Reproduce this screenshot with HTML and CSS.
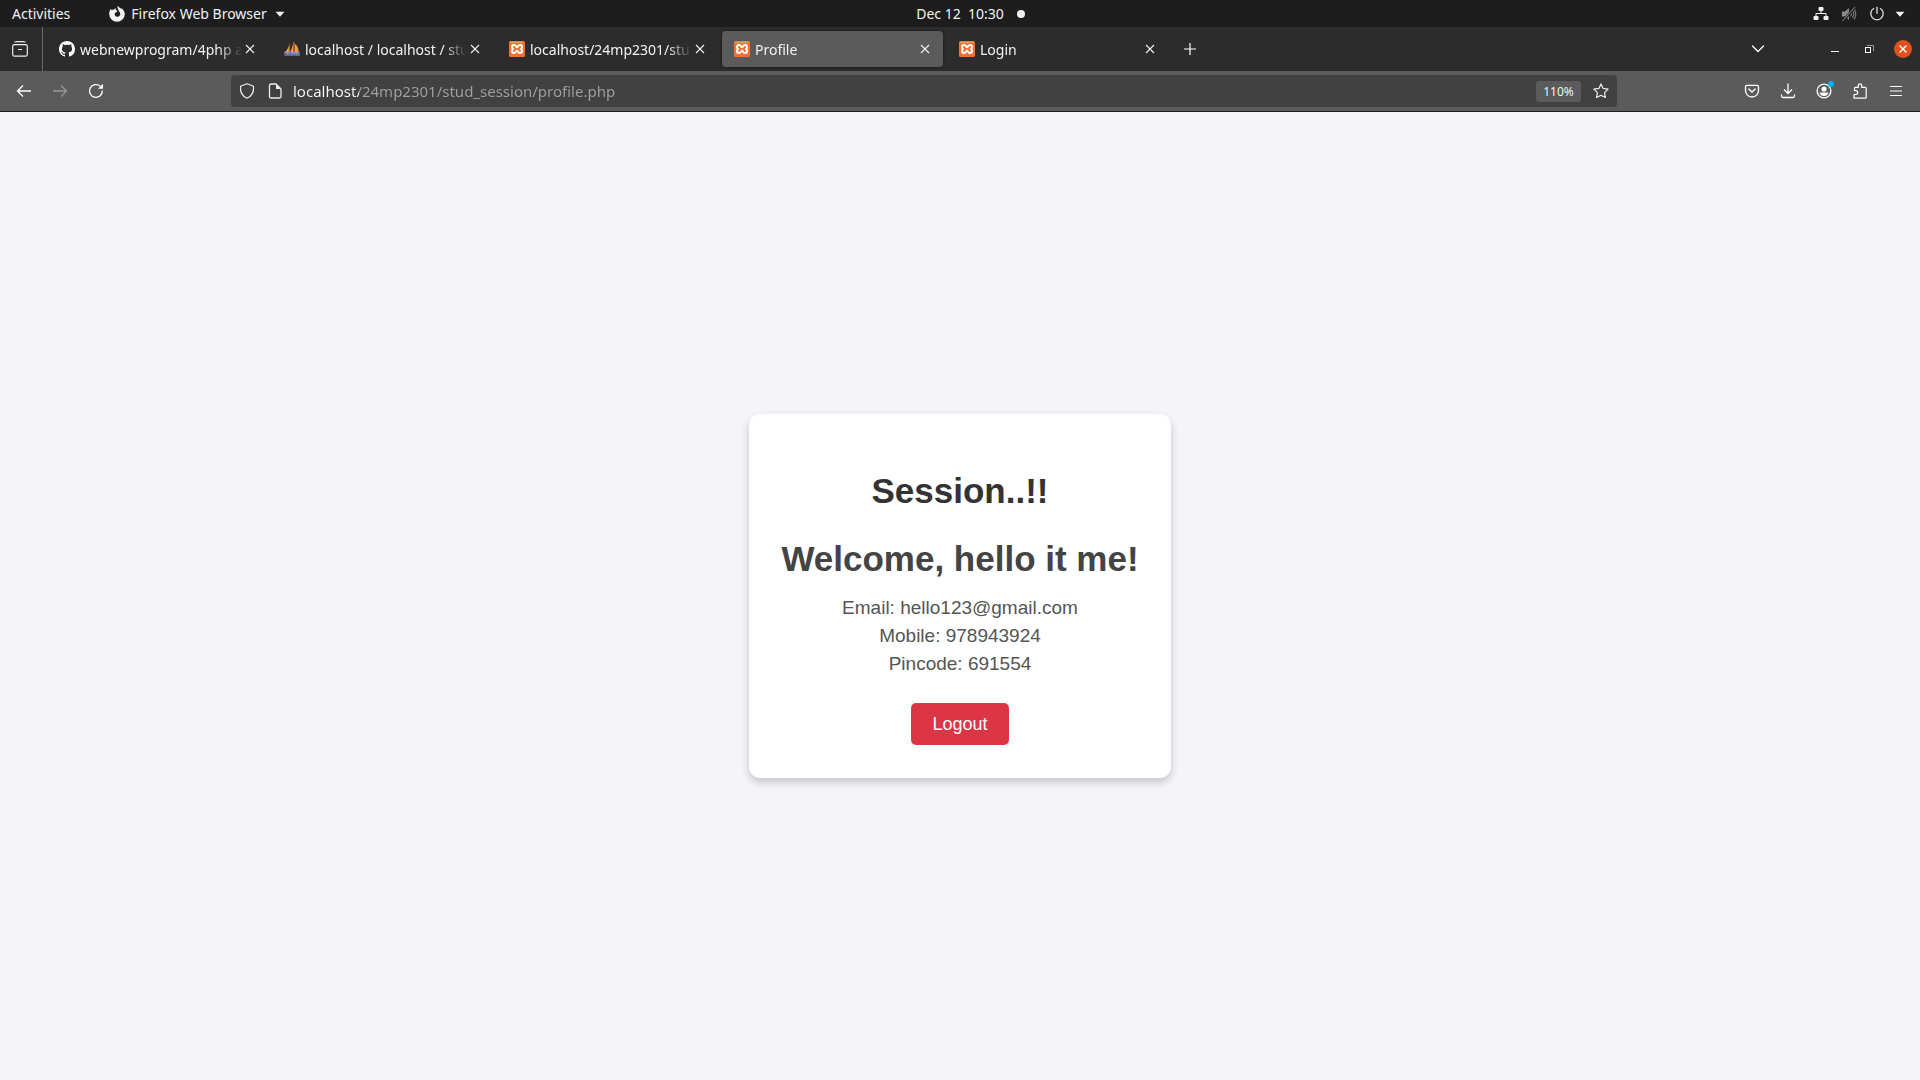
FILE: index.html
```html
<!DOCTYPE html>
<html lang="en">
<head>
<meta charset="utf-8">
<title>Profile</title>
<link rel="stylesheet" href="styles.css">
</head>
<body>
<svg class="defs" aria-hidden="true">
  <symbol id="close" viewBox="0 0 16 16"><path d="M4 4l8 8M12 4l-8 8" fill="none" stroke="currentColor" stroke-width="1.1"/></symbol>
  <symbol id="caret" viewBox="0 0 16 16"><path d="M3 5.500h10L8 11z" fill="currentColor"/></symbol>
  <symbol id="xampp" viewBox="0 0 16 16">
    <rect width="16" height="16" rx="1.500" fill="#f37030"/>
    <path d="M1 1.300h13" stroke="#f8b28c" stroke-width=".8"/>
    <path d="M8 6.300C7.200 6.300 7 4 5 4 3.600 4 3 5 3 6c0 .9.400 1.500 1 2-.6.500-1 1.100-1 2 0 1.100.600 2 2 2 2 0 2.200-2.300 3-2.300S9 12 11 12c1.400 0 2-.9 2-2 0-.9-.4-1.500-1-2 .6-.5 1-1.100 1-2 0-1-.6-2-2-2-2 0-2.200 2.300-3 2.300z" fill="none" stroke="#fff" stroke-width="2" stroke-linejoin="round"/>
  </symbol>
</svg>

<header class="topbar">
  <div class="topbar-left">
    <button class="top-item">Activities</button>
    <button class="top-item app-menu">
      <svg class="icon" viewBox="0 0 16 16"><path d="M8.500 0c2 .8 2.300 2 2.600 2.700l.7-.8C14 3 15.800 5.200 15.800 8A7.800 7.800 0 0 1 .2 8C.2 5.500 1 3.700 2 2.700l.4 1.600c.7-.5 1.500-.6 2.300-.5L6.600 2c0 1.200.2 2 .9 2.600l1 .5c-.2.900-1 1.200-2 1.500-.8.500-.6 1.300-.9 1.700.3 1.800 1.500 2.700 3 2.500 2-.2 3-1.900 2.500-3.800C10.600 5.300 8.300 3.500 8.500 0z" fill="#f2f2f2"/></svg>
      <span>Firefox Web Browser</span>
      <svg class="icon caret" viewBox="0 0 16 16"><use href="#caret"/></svg>
    </button>
  </div>
  <button class="clock"><span>Dec 12&nbsp; 10:30</span><i class="dot"></i></button>
  <button class="tray" aria-label="System menu">
    <svg class="icon" viewBox="0 0 16 16"><g fill="#f2f2f2"><rect x="5.500" y="1" width="5" height="4" rx="1"/><rect x=".5" y="10" width="5" height="4" rx="1"/><rect x="10.500" y="10" width="5" height="4" rx="1"/></g><path d="M8 4v4M3 10V7.500h10V10" fill="none" stroke="#f2f2f2"/></svg>
    <svg class="icon" viewBox="0 0 16 16"><path d="M1 5.500h3L8 2v12l-4-3.500H1z" fill="#8c8c8c"/><path d="M9.500 5.500q1.800 2.500 0 5M11.500 4q2.500 4 0 8M13 2.500q3.500 5.500 0 11" fill="none" stroke="#777" stroke-width="1.200"/><path d="M2 15L14 1" stroke="#1d1d1d" stroke-width="2.500"/><path d="M1.500 15L14 1" stroke="#8c8c8c"/></svg>
    <svg class="icon" viewBox="0 0 16 16"><path d="M5 2.200a6.200 6.200 0 1 0 6 0M8 .8v7" fill="none" stroke="#e4e4e4" stroke-width="1.300"/></svg>
    <svg class="icon caret" viewBox="0 0 16 16"><use href="#caret"/></svg>
  </button>
</header>

<div class="tabbar">
  <button class="recent" aria-label="Recent browsing">
    <svg class="icon" viewBox="0 0 16 16"><g fill="none" stroke="#eee" stroke-width="1.200" stroke-linecap="round"><path d="M3 1q1-.4 2-.4h6q1 0 2 .4"/><rect x=".7" y="3.600" width="14.600" height="11.600" rx="1.800"/><path d="M6.500 8.500h3"/></g></svg>
  </button>
  <nav class="tabs">
    <div class="tab"><a class="tab-link" href="#">
      <svg class="icon" viewBox="0 0 16 16"><path fill="#fff" d="M8 0C3.580 0 0 3.580 0 8c0 3.540 2.290 6.530 5.470 7.590.4.070.55-.17.55-.38 0-.19-.01-.82-.01-1.490-2.010.37-2.530-.49-2.690-.94-.09-.23-.48-.94-.82-1.130-.28-.15-.68-.52-.01-.53.63-.01 1.080.58 1.230.82.720 1.210 1.870.87 2.330.66.070-.52.280-.87.510-1.070-1.780-.2-3.640-.89-3.640-3.950 0-.87.310-1.590.820-2.150-.08-.2-.36-1.020.08-2.120 0 0 .67-.21 2.200.820.640-.18 1.320-.27 2-.27s1.360.090 2 .27c1.530-1.040 2.200-.82 2.200-.82.440 1.100.160 1.920.080 2.120.510.560.820 1.270.820 2.150 0 3.070-1.870 3.750-3.650 3.950.290.250.540.730.540 1.480 0 1.070-.01 1.930-.01 2.200 0 .210.150.460.550.380A8.010 8.010 0 0 0 16 8c0-4.420-3.580-8-8-8z"/></svg>
      <span class="tab-title">webnewprogram/4php a</span></a>
      <button class="tab-close" aria-label="Close tab"><svg class="icon" viewBox="0 0 16 16"><use href="#close"/></svg></button></div>
    <div class="tab"><a class="tab-link" href="#">
      <svg class="icon" viewBox="0 0 16 16"><path d="M5.500 2.500V11H1Q4.500 8 5.500 2.500zM9.500 0v11H6Q8.500 7 9.500 0zM10.500 2.500Q15 6 14.500 11h-4z" fill="#f29a3c"/><path d="M5.300 5v6M9.800 1v10" stroke="#b96b2a" stroke-width=".8"/><path d="M0 11h16l-1 3.500H1z" fill="#9a9bc0"/><path d="M1 15.500v-3h2v1.500H1M5 11.500V15M7 11.500V15M5 13h2M9 15v-2.500l1.500 1 1.500-1V15M14 15v-3h1.500v3" fill="none" stroke="#5c608c"/></svg>
      <span class="tab-title">localhost / localhost / stu</span></a>
      <button class="tab-close" aria-label="Close tab"><svg class="icon" viewBox="0 0 16 16"><use href="#close"/></svg></button></div>
    <div class="tab"><a class="tab-link" href="#">
      <svg class="icon" viewBox="0 0 16 16"><use href="#xampp"/></svg>
      <span class="tab-title">localhost/24mp2301/stu</span></a>
      <button class="tab-close" aria-label="Close tab"><svg class="icon" viewBox="0 0 16 16"><use href="#close"/></svg></button></div>
    <div class="tab active"><a class="tab-link" href="#">
      <svg class="icon" viewBox="0 0 16 16"><use href="#xampp"/></svg>
      <span class="tab-title">Profile</span></a>
      <button class="tab-close" aria-label="Close tab"><svg class="icon" viewBox="0 0 16 16"><use href="#close"/></svg></button></div>
    <div class="tab"><a class="tab-link" href="#">
      <svg class="icon" viewBox="0 0 16 16"><use href="#xampp"/></svg>
      <span class="tab-title">Login</span></a>
      <button class="tab-close" aria-label="Close tab"><svg class="icon" viewBox="0 0 16 16"><use href="#close"/></svg></button></div>
    <button class="tool new-tab" aria-label="New tab"><svg class="icon" viewBox="0 0 16 16"><path d="M8 2v12M2 8h12" stroke="#fff" stroke-width="1.200"/></svg></button>
  </nav>
  <button class="tool list-tabs" aria-label="List all tabs"><svg class="icon" viewBox="0 0 16 16"><path d="M2.500 5L8 10.500 13.500 5" fill="none" stroke="#fff" stroke-width="1.300" stroke-linecap="round"/></svg></button>
  <div class="window-controls">
    <button class="win" aria-label="Minimize"><svg class="icon" viewBox="0 0 16 16"><path d="M4 10.500h8" stroke="#fff"/></svg></button>
    <button class="win" aria-label="Restore"><svg class="icon" viewBox="0 0 16 16"><path d="M6 4.500h6.500V10" fill="none" stroke="#999"/><rect x="4.500" y="6.500" width="5" height="5" fill="none" stroke="#fff"/></svg></button>
    <button class="win win-close" aria-label="Close"><svg class="icon" viewBox="0 0 16 16"><path d="M4.500 4.500l7 7M11.500 4.500l-7 7" stroke="#fff" stroke-width="1.400"/></svg></button>
  </div>
</div>

<div class="toolbar">
  <button class="tool" aria-label="Back"><svg class="icon" viewBox="0 0 16 16"><path d="M15 8H1.500M7 2.500L1.500 8 7 13.500" fill="none" stroke="#fff" stroke-width="1.300"/></svg></button>
  <button class="tool" aria-label="Forward" disabled><svg class="icon" viewBox="0 0 16 16"><path d="M1 8h13.500M9 2.500L14.500 8 9 13.500" fill="none" stroke="#969696" stroke-width="1.300"/></svg></button>
  <button class="tool" aria-label="Reload"><svg class="icon" viewBox="0 0 16 16"><path d="M14.300 7.500A6.400 6.400 0 1 1 12.200 3.200" fill="none" stroke="#fff" stroke-width="1.300"/><path d="M15 .8v5H10z" fill="#fff"/></svg></button>
  <div class="urlbar">
    <svg class="icon" viewBox="0 0 16 16"><path d="M8 .8L14.500 3.300C15 9 12.500 13.300 8 15.200 3.500 13.300 1 9 1.500 3.300z" fill="none" stroke="#eee" stroke-width="1.200" stroke-linejoin="round"/></svg>
    <svg class="icon" viewBox="0 0 16 16"><path d="M9 1H4Q2.500 1 2.500 2.500v11Q2.500 15 4 15h8.500q1.500 0 1.500-1.500V6z" fill="none" stroke="#eee" stroke-width="1.300"/><path d="M9 1v5h5z" fill="#eee"/></svg>
    <input class="address" type="text" aria-label="Address" value="localhost/24mp2301/stud_session/profile.php">
    <button class="zoom">110%</button>
    <button class="star" aria-label="Bookmark this page"><svg class="icon" viewBox="0 0 16 16"><path d="M8 .9l2.100 4.500 5 .7-3.600 3.500.9 4.900L8 12.200l-4.400 2.300.9-4.900L.9 6.100l5-.7z" fill="none" stroke="#eee" stroke-width="1.200" stroke-linejoin="round"/></svg></button>
  </div>
  <button class="tool" aria-label="Pocket"><svg class="icon" viewBox="0 0 16 16"><path d="M3 2.300h10q1.500 0 1.500 1.500V7.500a6.500 6.500 0 0 1-13 0V3.800q0-1.500 1.500-1.500z" fill="none" stroke="#fff" stroke-width="1.300"/><path d="M4.800 6L8 9l3.200-3" fill="none" stroke="#fff" stroke-width="1.300" stroke-linecap="round"/></svg></button>
  <button class="tool" aria-label="Downloads"><svg class="icon" viewBox="0 0 16 16"><path d="M8 .5v10M4 6.500l4 4 4-4M1.500 11.500v1.500q0 1.500 1.500 1.500h10q1.500 0 1.500-1.500v-1.500" fill="none" stroke="#fff" stroke-width="1.300"/></svg></button>
  <button class="tool account" aria-label="Account"><svg class="icon" viewBox="0 0 16 16"><circle cx="8" cy="8" r="6.900" fill="none" stroke="#fff" stroke-width="1.300"/><circle cx="8" cy="6" r="2.600" fill="#fff"/><path d="M3.500 9.500h9Q11.500 13 8 13t-4.500-3.500z" fill="#fff"/></svg><i class="badge"></i></button>
  <button class="tool" aria-label="Extensions"><svg class="icon" viewBox="0 0 16 16"><path d="M2 15.200h11.200q1 0 1-1V5.300q0-1-1-1H9.700V2.500a1.700 1.700 0 0 0-3.400 0v1.800H3.500q-1 0-1 1v2.400h1.300a1.900 1.900 0 0 1 0 3.800H2z" fill="none" stroke="#fff" stroke-width="1.200" stroke-linejoin="round"/></svg></button>
  <button class="tool" aria-label="Menu"><svg class="icon" viewBox="0 0 16 16"><path d="M2 3.500h12M2 8h12M2 12.500h12" stroke="#fff" stroke-width="1.200"/></svg></button>
</div>

<main class="page">
  <section class="card">
    <h1 class="title">Session..!!</h1>
    <h2 class="welcome">Welcome, hello it me!</h2>
    <p class="detail">Email: hello123@gmail.com</p>
    <p class="detail">Mobile: 978943924</p>
    <p class="detail">Pincode: 691554</p>
    <button class="logout">Logout</button>
  </section>
</main>
</body>
</html>
```
FILE: styles.css
```css
* {
  box-sizing: border-box;
}

body {
  margin: 0;
  min-height: 100vh;
  display: flex;
  flex-direction: column;
  background: #f4f4f9;
  color: #f2f2f2;
  font-family: "Noto Sans", "Open Sans", sans-serif;
  font-size: 14px;
}

button,
input {
  margin: 0;
  padding: 0;
  border: 0;
  background: none;
  color: inherit;
  font: inherit;
}

button {
  display: flex;
  align-items: center;
  justify-content: center;
}

.defs {
  display: none;
}

.icon {
  display: block;
  flex: none;
  width: 16px;
  height: 16px;
}

/* Desktop bar */
.topbar {
  display: grid;
  grid-template-columns: 1fr auto 1fr;
  height: 27px;
  background: #1d1d1d;
}

.topbar-left {
  display: flex;
  gap: 39px;
  padding-left: 12px;
}

.app-menu {
  gap: 6px;
}

.caret {
  width: 14px;
  height: 14px;
}

.clock {
  gap: 13px;
  padding-left: 21px;
}

.dot {
  width: 8px;
  height: 8px;
  border-radius: 50%;
  background: #f2f2f2;
}

.tray {
  justify-self: end;
  gap: 12px;
  padding-right: 13px;
}

.tray .caret {
  margin-left: -4px;
}

/* Tab strip */
.tabbar {
  display: flex;
  height: 44px;
  background: #2c2c2c;
}

.recent {
  width: 43px;
  padding-right: 3px;
  border-right: 1px solid #6b6b6b;
}

.tabs {
  display: flex;
  flex: 1;
  align-items: center;
  min-width: 0;
  padding-left: 2px;
}

.tab {
  display: flex;
  flex: 0 1 221px;
  align-items: center;
  min-width: 0;
  height: 36px;
  margin: 0 2px;
  padding: 0 10px 0 12px;
  border-radius: 4px;
}

.active {
  background: #5b5b5b;
  box-shadow: 0 0 3px rgba(0, 0, 0, 0.5);
}

.tab-link {
  display: flex;
  flex: 1;
  align-items: center;
  gap: 5px;
  min-width: 0;
  color: inherit;
  text-decoration: none;
}

.tab-title {
  flex: 1;
  overflow: hidden;
  white-space: nowrap;
  mask-image: linear-gradient(to left, transparent, #000 24px);
}

.tool {
  position: relative;
  flex: none;
  width: 36px;
  height: 36px;
}

.new-tab {
  margin-left: 2px;
}

.list-tabs {
  align-self: center;
  margin-right: 50px;
}

.window-controls {
  display: flex;
  align-items: center;
  gap: 16px;
  padding-right: 8px;
}

.win {
  width: 18px;
  height: 18px;
  border-radius: 50%;
}

.win-close {
  background: #e4501b;
}

/* Navigation toolbar */
.toolbar {
  display: flex;
  align-items: center;
  height: 41px;
  padding: 0 6px;
  background: #5b5b5b;
  border-bottom: 1px solid #1d1d1d;
}

.urlbar {
  display: flex;
  flex: 1;
  align-items: center;
  gap: 12px;
  height: 32px;
  margin: 0 117px;
  padding: 0 8px;
  border-radius: 4px;
  background: #414141;
}

.address {
  flex: 1;
  min-width: 0;
  height: 32px;
  margin-left: -2px;
  background: linear-gradient(to right, #fbfbfe 66px, #a0a0a0 66px);
  background-clip: text;
  color: transparent;
  font-size: 15px;
}

.zoom {
  width: 45px;
  height: 21px;
  border-radius: 3px;
  background: #5b5b5b;
  font-size: 12px;
}

.badge {
  position: absolute;
  top: 8px;
  right: 8px;
  width: 6px;
  height: 6px;
  border-radius: 50%;
  background: #00b3f4;
}

/* Profile page */
.page {
  display: flex;
  flex: 1;
  align-items: center;
  justify-content: center;
  font-family: "Liberation Sans", Arial, sans-serif;
}

.card {
  display: flex;
  flex-direction: column;
  align-items: center;
  padding: 33px 32px;
  border-radius: 11px;
  background: #fff;
  box-shadow: 0 4px 9px rgba(0, 0, 0, 0.2);
  text-align: center;
}

.title,
.welcome {
  margin: 24px 0 28px;
  color: #333;
  font-size: 35px;
  line-height: 40px;
}

.welcome {
  margin: 0 0 15px;
  color: #444;
}

.detail {
  margin: 0;
  color: #555;
  font-size: 19px;
  line-height: 28px;
}

.logout {
  height: 42px;
  margin-top: 25px;
  padding: 0 21px;
  border-radius: 5px;
  background: #dc3545;
  color: #fff;
  font-size: 18px;
}
```
